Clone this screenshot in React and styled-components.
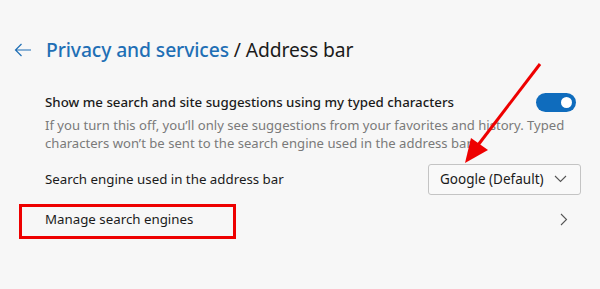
import styled, { createGlobalStyle } from 'styled-components';

const GlobalStyle = createGlobalStyle`
  html, body {
    margin: 0;
    padding: 0;
    background: #f7f7f7;
  }
  body {
    font-family: 'Noto Sans', 'Open Sans', Arial, sans-serif;
    color: #1b1b1b;
  }
`;

const Page = styled.div`
  position: relative;
  width: 600px;
  height: 289px;
  overflow: hidden;
  background: #f7f7f7;
  box-sizing: border-box;
  padding-top: 35px;
`;

const Header = styled.div`
  display: flex;
  align-items: center;
  gap: 14px;
  padding-left: 14px;
  height: 30px;
`;

const BackButton = styled.span`
  display: flex;
  align-items: center;
  color: #1f6fb5;
`;

const Title = styled.h1`
  margin: 0;
  font-size: 19.3px;
  font-weight: 400;
  line-height: 30px;
  color: #1b1b1b;
  letter-spacing: -0.1px;
`;

const Crumb = styled.span`
  color: #1f6fb5;
  font-weight: 500;
`;

const Section = styled.div`
  padding: 0 19px 0 45px;
  margin-top: 27px;
`;

const Setting = styled.div`
  display: flex;
  flex-direction: column;
`;

const Row = styled.div`
  display: flex;
  align-items: center;
  justify-content: space-between;
  min-height: ${({ h }) => h}px;
`;

const Label = styled.div`
  font-size: 13.3px;
  line-height: 20px;
  font-weight: ${({ strong }) => (strong ? 500 : 400)};
  color: #1b1b1b;
`;

const Description = styled.div`
  margin-top: 4px;
  margin-bottom: 7px;
  font-size: 13.1px;
  line-height: 18px;
  color: #7a7a7a;
  white-space: nowrap;
`;

const Toggle = styled.div`
  flex: none;
  width: 40px;
  height: 19px;
  border-radius: 10px;
  background: #0f6cbd;
  display: flex;
  align-items: center;
  justify-content: flex-end;
  padding-right: 4px;
  box-sizing: border-box;
  margin-right: 5px;
`;

const Knob = styled.span`
  width: 11px;
  height: 11px;
  border-radius: 50%;
  background: #fff;
`;

const Select = styled.div`
  flex: none;
  width: 153px;
  height: 31px;
  box-sizing: border-box;
  border: 1px solid #c4c4c4;
  border-radius: 3px;
  background: #f9f9f9;
  display: flex;
  align-items: center;
  justify-content: space-between;
  padding: 0 13px 0 11px;
  font-size: 13.5px;
  color: #1b1b1b;
`;

const Chevron = styled.span`
  display: flex;
  align-items: center;
  color: #555;
  margin-right: ${({ mr }) => mr || 0}px;
`;

const Highlight = styled.div`
  position: absolute;
  left: 19px;
  top: 204px;
  width: 217px;
  height: 35px;
  box-sizing: border-box;
  border: 3px solid #ee0000;
  pointer-events: none;
`;

const Pointer = styled.svg`
  position: absolute;
  left: 0;
  top: 0;
  pointer-events: none;
`;

export default function App() {
  return (
    <>
      <GlobalStyle />
      <Page>
        <Header>
          <BackButton>
            <svg width="18" height="14" viewBox="0 0 18 14" fill="none" stroke="currentColor" strokeWidth="1.2">
              <path d="M17 7H1.5M7.5 1L1.5 7l6 6" />
            </svg>
          </BackButton>
          <Title>
            <Crumb>Privacy and services</Crumb> / Address bar
          </Title>
        </Header>
        <Section>
          <Setting>
            <Row h={20}>
              <Label strong>Show me search and site suggestions using my typed characters</Label>
              <Toggle>
                <Knob />
              </Toggle>
            </Row>
            <Description>
              If you turn this off, you’ll only see suggestions from your favorites and history. Typed
              <br />
              characters won’t be sent to the search engine used in the address bar.
            </Description>
          </Setting>
          <Row h={40}>
            <Label>Search engine used in the address bar</Label>
            <Select>
              Google (Default)
              <Chevron>
                <svg width="13" height="8" viewBox="0 0 13 8" fill="none" stroke="currentColor" strokeWidth="1.1">
                  <path d="M1 1l5.5 5.5L12 1" />
                </svg>
              </Chevron>
            </Select>
          </Row>
          <Row h={40}>
            <Label>Manage search engines</Label>
            <Chevron mr={13}>
              <svg width="8" height="13" viewBox="0 0 8 13" fill="none" stroke="currentColor" strokeWidth="1.1">
                <path d="M1 1l5.5 5.5L1 12" />
              </svg>
            </Chevron>
          </Row>
        </Section>
        <Highlight />
        <Pointer width="600" height="289" viewBox="0 0 600 289">
          <line x1="540" y1="64" x2="475" y2="149" stroke="#ee0000" strokeWidth="3" />
          <polygon points="465,163 471,138 488,150" fill="#ee0000" />
        </Pointer>
      </Page>
    </>
  );
}
